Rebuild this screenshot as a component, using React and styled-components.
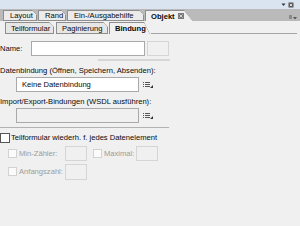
import React from "react";
import styled, { createGlobalStyle } from "styled-components";

const Global = createGlobalStyle`
  body {
    margin: 0;
    background: #f0f0f0;
    font-family: "Liberation Sans", Arial, sans-serif;
    font-size: 7.6px;
    color: #0a0a0a;
  }
`;

const Panel = styled.div`
  width: 300px;
  height: 226px;
  overflow: hidden;
  background: #f0f0f0;
`;

const TitleBar = styled.div`
  height: 9px;
  background: #d9e4f0;
  display: flex;
  justify-content: flex-end;
  align-items: center;
  gap: 2px;
  padding-right: 6px;
`;

const OuterStrip = styled.div`
  height: 12px;
  box-sizing: border-box;
  padding: 1px 0 0 3px;
  background: #bababa;
  display: flex;
  align-items: stretch;
`;

const Tab = styled.div`
  position: relative;
  flex: none;
  width: ${(p) => p.$w}px;
  display: flex;
  align-items: center;
  gap: 3px;
  box-sizing: border-box;
  padding-left: ${(p) => (p.$active ? 5 : 6)}px;
  margin-right: ${(p) => (p.$gap ? p.$gap : 1)}px;
  background: ${(p) => (p.$active ? "#f0f0f0" : "#ebebeb")};
  border: 1px solid #8e8e8e;
  border-right: none;
  border-bottom: ${(p) => (p.$active ? "none" : "1px solid #8e8e8e")};
  font-weight: ${(p) => (p.$active ? "bold" : "normal")};
  white-space: nowrap;
  line-height: 9px;
  clip-path: ${(p) =>
    p.$active
      ? "polygon(0 0, calc(100% - 9px) 0, 100% 100%, 0 100%)"
      : "polygon(0 0, calc(100% - 5px) 0, 100% 5px, 100% 100%, 0 100%)"};

  &::after {
    content: "";
    position: absolute;
    top: -1px;
    right: 0;
    width: ${(p) => (p.$active ? 9 : 5)}px;
    height: ${(p) => (p.$active ? "calc(100% + 1px)" : "5px")};
    background: linear-gradient(
      to top right,
      transparent calc(50% - 0.7px),
      #8e8e8e 50%,
      transparent calc(50% + 0.7px)
    );
  }

  &::before {
    content: "";
    position: absolute;
    top: 4px;
    right: 0;
    bottom: 0;
    width: 1px;
    background: ${(p) => (p.$active ? "transparent" : "#8e8e8e")};
  }
`;

const StripEnd = styled.div`
  flex: 1;
  display: flex;
  justify-content: flex-end;
  align-items: flex-end;
  padding: 0 3px 1px 0;
`;

const InnerStrip = styled.div`
  height: 13px;
  box-sizing: border-box;
  padding: 1px 0 0 5px;
  display: flex;
  align-items: stretch;
`;

const InnerTab = styled(Tab)`
  background: ${(p) => (p.$active ? "#f0f0f0" : "#e6e6e6")};
  padding-left: 5px;
  clip-path: ${(p) =>
    p.$active
      ? "polygon(0 0, calc(100% - 6px) 0, 100% 100%, 0 100%)"
      : "polygon(0 0, calc(100% - 5px) 0, 100% 5px, 100% 100%, 0 100%)"};

  &::after {
    width: ${(p) => (p.$active ? 6 : 5)}px;
  }
`;

const InnerRule = styled.div`
  flex: 1;
  margin-right: 3px;
  border-bottom: 1px solid #a4a4a4;
`;

const Content = styled.div`
  padding-top: 7px;
  width: 170px;
`;

const Row = styled.div`
  display: flex;
  align-items: center;
  gap: ${(p) => p.$gap || 0}px;
  padding-left: ${(p) => p.$indent || 0}px;
  margin-top: ${(p) => p.$top || 0}px;
`;

const Label = styled.div`
  width: ${(p) => (p.$width ? `${p.$width}px` : "auto")};
  line-height: 10px;
  white-space: nowrap;
  color: ${(p) => (p.$disabled ? "#9c9c9c" : "#0a0a0a")};
`;

const Caption = styled.div`
  line-height: 10px;
  margin-top: ${(p) => p.$top || 0}px;
  white-space: nowrap;
`;

const Field = styled.div`
  box-sizing: border-box;
  flex: none;
  width: ${(p) => p.$width}px;
  height: ${(p) => p.$height || 15}px;
  background: ${(p) => (p.$blank ? "#f0f0f0" : "#ffffff")};
  border: 1px solid ${(p) => (p.$soft ? "#d5d5d5" : "#a9a9a9")};
  display: flex;
  align-items: center;
  padding-left: 5px;
  line-height: 10px;
  white-space: nowrap;
`;

const PartRule = styled.div`
  margin: 3px 0 0 98px;
  width: 72px;
  height: 2px;
  background: #d6d6d6;
`;

const Separator = styled.div`
  margin-top: 4px;
  width: 169px;
  height: 1px;
  background: #b2b2b2;
`;

const Check = styled.div`
  box-sizing: border-box;
  flex: none;
  width: ${(p) => (p.$disabled ? 9 : 10)}px;
  height: ${(p) => (p.$disabled ? 9 : 10)}px;
  background: ${(p) => (p.$disabled ? "#fbfbfb" : "#ffffff")};
  border: 1px solid ${(p) => (p.$disabled ? "#d2d2d2" : "#555555")};
`;

const Options = styled.div`
  display: grid;
  grid-template-columns: 57px 22px 49px 22px;
  grid-auto-rows: 15px;
  row-gap: 3px;
  padding-left: 8px;
  margin-top: 3px;
`;

const OptCell = styled.div`
  display: flex;
  align-items: center;
  gap: 2px;
  padding-left: ${(p) => p.$indent || 0}px;
`;

const ListIcon = () => (
  <svg width="11" height="8" viewBox="0 0 11 8">
    {[1, 3, 5].map((y) => (
      <g key={y} fill="#555">
        <rect x="0" y={y} width="1" height="1" />
        <rect x="2" y={y} width="5" height="1" />
      </g>
    ))}
    <path d="M10 4 L10 7 L7 7 Z" fill="#333" />
  </svg>
);

const TinyClose = () => (
  <svg width="6" height="6" viewBox="0 0 6 6">
    <rect x="0" y="0" width="6" height="6" fill="#7a7a7a" />
    <path d="M1.5 1.5 L4.5 4.5 M4.5 1.5 L1.5 4.5" stroke="#e8e8e8" strokeWidth="0.8" />
  </svg>
);

const TitleIcons = () => (
  <>
    <svg width="5" height="5" viewBox="0 0 5 5">
      <path d="M0.5 1.5 L4.5 1.5 L2.5 4 Z" fill="#333" />
    </svg>
    <svg width="6" height="6" viewBox="0 0 6 6">
      <rect x="0.5" y="0.5" width="5" height="5" fill="#555" />
      <path d="M1.8 1.8 L4.2 4.2 M4.2 1.8 L1.8 4.2" stroke="#fff" strokeWidth="0.8" />
    </svg>
  </>
);

const MenuIcon = () => (
  <svg width="8" height="5" viewBox="0 0 8 5">
    <rect x="0" y="0" width="3" height="4" fill="#8a8a8a" />
    <path d="M4 2 L8 2 L6 4.5 Z" fill="#555" />
  </svg>
);

export default function App() {
  return (
    <Panel>
      <Global />
      <TitleBar>
        <TitleIcons />
      </TitleBar>

      <OuterStrip>
        <Tab $w={34}>Layout</Tab>
        <Tab $w={28}>Rand</Tab>
        <Tab $w={77} $gap={1}>Ein-/Ausgabehilfe</Tab>
        <Tab $w={48} $active>
          Objekt <TinyClose />
        </Tab>
        <StripEnd>
          <MenuIcon />
        </StripEnd>
      </OuterStrip>

      <InnerStrip>
        <InnerTab $w={49} $gap={2}>Teilformular</InnerTab>
        <InnerTab $w={52} $gap={1}>Paginierung</InnerTab>
        <InnerTab $w={41} $active>Bindung</InnerTab>
        <InnerRule />
      </InnerStrip>

      <Content>
        <Row $gap={2}>
          <Label $width={29}>Name:</Label>
          <Field $width={114} />
          <Field $width={22} $blank $soft />
        </Row>
        <PartRule />

        <Caption $top={5}>Datenbindung (Öffnen, Speichern, Absenden):</Caption>
        <Row $indent={16} $gap={4} $top={1}>
          <Field $width={123}>Keine Datenbindung</Field>
          <ListIcon />
        </Row>

        <Caption $top={5}>Import/Export-Bindungen (WSDL ausführen):</Caption>
        <Row $indent={16} $gap={4} $top={1}>
          <Field $width={123} $blank />
          <ListIcon />
        </Row>

        <Separator />

        <Row $gap={1} $top={5}>
          <Check />
          <Label>Teilformular wiederh. f. jedes Datenelement</Label>
        </Row>

        <Options>
          <OptCell>
            <Check $disabled />
            <Label $disabled>Min-Zähler:</Label>
          </OptCell>
          <Field $width={22} $blank $soft />
          <OptCell $indent={6}>
            <Check $disabled />
            <Label $disabled>Maximal:</Label>
          </OptCell>
          <Field $width={22} $blank $soft />
          <OptCell>
            <Check $disabled />
            <Label $disabled>Anfangszahl:</Label>
          </OptCell>
          <Field $width={22} $height={16} $blank $soft />
        </Options>
      </Content>
    </Panel>
  );
}
